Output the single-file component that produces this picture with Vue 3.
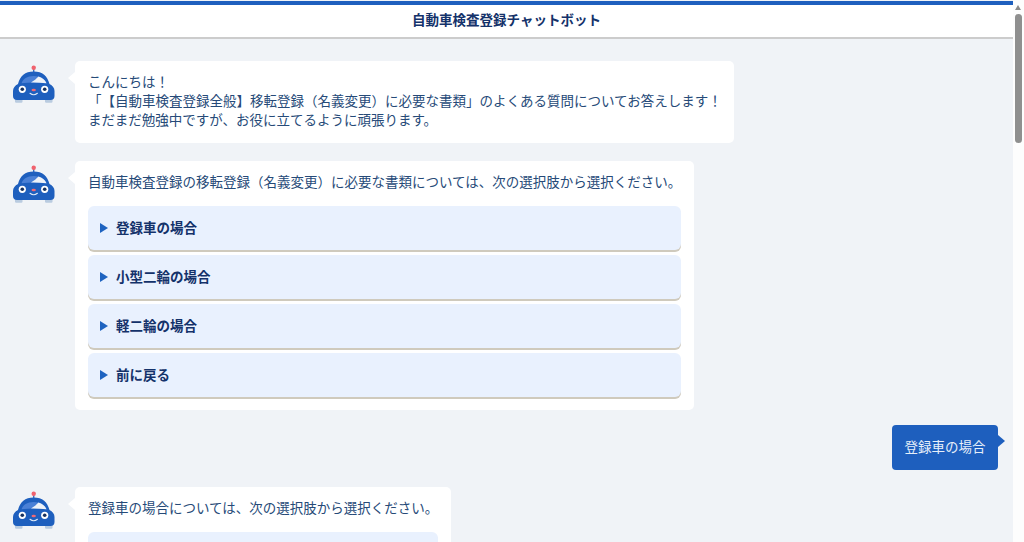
<script setup>
const groups = [
  {
    type: 'bot',
    lines: ['こんにちは！', '「【自動車検査登録全般】移転登録（名義変更）に必要な書類」のよくある質問についてお答えします！', 'まだまだ勉強中ですが、お役に立てるように頑張ります。'],
    options: []
  },
  {
    type: 'bot',
    lines: ['自動車検査登録の移転登録（名義変更）に必要な書類については、次の選択肢から選択ください。'],
    options: ['登録車の場合', '小型二輪の場合', '軽二輪の場合', '前に戻る']
  },
  { type: 'user', lines: ['登録車の場合'], options: [] },
  {
    type: 'bot',
    lines: ['登録車の場合については、次の選択肢から選択ください。'],
    options: ['']
  }
]
</script>

<template>
  <div class="page">
    <main class="main">
      <header class="head"><h1>自動車検査登録チャットボット</h1></header>
      <div class="log">
        <template v-for="(g, i) in groups" :key="i">
          <div v-if="g.type === 'bot'" class="row">
            <svg class="avatar" viewBox="0 0 44 38" width="44" height="38" aria-hidden="true">
              <rect x="21" y="3" width="1.400" height="5" fill="#3a6fc4" />
              <circle cx="21.700" cy="2.700" r="2.200" fill="#f0626e" />
              <rect x="3" y="33" width="7.500" height="4.800" rx="1.200" fill="#b9cbe0" />
              <rect x="33" y="33" width="7.500" height="4.800" rx="1.200" fill="#b9cbe0" />
              <path d="M6 19 C8 11 13 6.500 21.700 6.500 C30.500 6.500 35.500 11 37.500 19 C40.500 20.500 42.500 23 42.500 26 L42.500 31 C42.500 33.500 41 35 38.500 35 L5 35 C2.500 35 1 33.500 1 31 L1 26 C1 23 3 20.500 6 19 Z" fill="#1e5fbe" />
              <path d="M9.500 18.300 C11 14 15 11 21.700 11 C28.500 11 32.500 14 34.500 18.300 C26 17.300 17.500 17.300 9.500 18.300 Z" fill="#4a80d6" />
              <path d="M19 17.500 C22 15.800 24.500 13.800 26.500 11.600 C30 12.600 33 14.800 34.500 18.300 C29 17.600 24 17.400 19 17.500 Z" fill="#eef2f8" />
              <circle cx="10.300" cy="24.300" r="3.600" fill="#fff" />
              <circle cx="32.700" cy="24.300" r="3.600" fill="#fff" />
              <circle cx="10.300" cy="24.300" r="1.800" fill="#17315f" />
              <circle cx="32.700" cy="24.300" r="1.800" fill="#17315f" />
              <ellipse cx="21.700" cy="25" rx="2.200" ry="1.200" fill="#ee6a76" />
              <path d="M18 28.300 Q21.700 31.300 25.400 28.300" fill="none" stroke="#dce8f7" stroke-width="1.100" stroke-linecap="round" />
            </svg>
            <div class="bubble">
              <p v-for="l in g.lines" :key="l" class="line">{{ l }}</p>
              <ul v-if="g.options.length" class="opts">
                <li v-for="o in g.options" :key="o" class="opt"><span class="tri"></span>{{ o }}</li>
              </ul>
            </div>
          </div>
          <div v-else class="row user">
            <div class="ububble">{{ g.lines[0] }}</div>
          </div>
        </template>
      </div>
    </main>
    <div class="scroll" aria-hidden="true">
      <span class="arrow"></span>
      <span class="thumb"></span>
    </div>
  </div>
</template>

<style>
html, body { margin: 0; height: 100%; overflow: hidden; }
</style>

<style scoped>
.page {
  display: flex;
  height: 542px;
  overflow: hidden;
  font-family: "Noto Sans CJK JP", "Noto Sans", sans-serif;
  font-size: 13.5px;
  line-height: 19px;
  color: #264a78;
  text-spacing-trim: space-all;
}
.main { flex: 1; min-width: 0; background: #f0f3f7; overflow: hidden; }
.head {
  height: 28px;
  margin-top: 1px;
  padding-bottom: 4px;
  background: #fff;
  border-top: 4px solid #1e5fbe;
  border-bottom: 2px solid #cccccc;
  display: flex;
  align-items: center;
  justify-content: center;
}
.head h1 { margin: 0; font-size: 13.5px; font-weight: 700; color: #14326a; }
.log { padding: 22px 15px 0 12px; display: flex; flex-direction: column; gap: 18px; }
.row { display: flex; align-items: flex-start; gap: 19px; }
.row.user { justify-content: flex-end; margin-top: -3px; margin-bottom: -1px; }
.avatar { flex: none; margin-top: 4px; display: block; }
.bubble {
  position: relative;
  background: #fff;
  border-radius: 5px;
  padding: 11px 12.500px 13px 13px;
}
.bubble::before {
  content: "";
  position: absolute;
  left: -7px;
  top: 11px;
  border-style: solid;
  border-width: 6.500px 7px 6.500px 0;
  border-color: transparent #fff transparent transparent;
}
.line { margin: 0; white-space: nowrap; }
.line:last-child { margin-bottom: 1px; }
.opts { list-style: none; margin: 15px 0 0; padding: 0; display: flex; flex-direction: column; gap: 5px; }
.opt {
  height: 44px;
  box-sizing: border-box;
  display: flex;
  align-items: center;
  padding: 0 0 2px 12px;
  background: #e9f1fe;
  border-radius: 6px;
  box-shadow: 0 2px 0 #cfcabd;
  font-weight: 700;
  color: #14326a;
}
.tri {
  flex: none;
  width: 0;
  height: 0;
  margin: 2px 8px 0 0;
  border-style: solid;
  border-width: 5.500px 0 5.500px 8px;
  border-color: transparent transparent transparent #1e63c0;
}
.ububble {
  position: relative;
  box-sizing: border-box;
  padding-bottom: 3px;
  background: #1e5fbe;
  color: #e6effa;
  border-radius: 4px;
  height: 45px;
  width: 106px;
  display: flex;
  align-items: center;
  justify-content: center;
}
.ububble::after {
  content: "";
  position: absolute;
  right: -7px;
  top: 10px;
  border-style: solid;
  border-width: 6px 0 6px 7px;
  border-color: transparent transparent transparent #1e5fbe;
}
.scroll {
  flex: none;
  width: 11px;
  background: #fdfdfd;
  position: relative;
}
.arrow {
  position: absolute;
  left: 2px;
  top: 5px;
  border-style: solid;
  border-width: 0 3.500px 5px 3.500px;
  border-color: transparent transparent #8a8a8a transparent;
}
.thumb {
  position: absolute;
  left: 2px;
  top: 14px;
  width: 7px;
  height: 129px;
  border-radius: 4px;
  background: #8f8f8f;
}
</style>
